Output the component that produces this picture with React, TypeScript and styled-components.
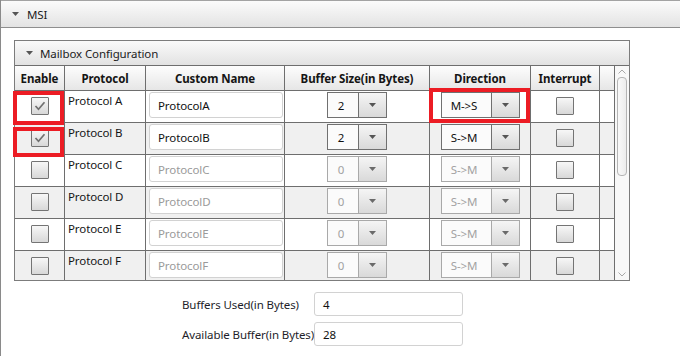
import React from "react";
import styled, { createGlobalStyle } from "styled-components";

const GlobalStyle = createGlobalStyle`
  html, body { margin: 0; padding: 0; background: #fff; }
  body {
    font-family: "Noto Sans", "Open Sans", sans-serif;
    font-size: 11.5px;
    letter-spacing: -0.1px;
    color: #151515;
  }
`;

const LINE = "#6e6e6e";
const COLS = "50px 81px 139px 145px 101px 69px 15px";

type Row = {
  name: string;
  custom: string;
  size: string;
  dir: string;
  checked: boolean;
  active: boolean;
};

const rows: Row[] = [
  { name: "Protocol A", custom: "ProtocolA", size: "2", dir: "M->S", checked: true, active: true },
  { name: "Protocol B", custom: "ProtocolB", size: "2", dir: "S->M", checked: true, active: true },
  { name: "Protocol C", custom: "ProtocolC", size: "0", dir: "S->M", checked: false, active: false },
  { name: "Protocol D", custom: "ProtocolD", size: "0", dir: "S->M", checked: false, active: false },
  { name: "Protocol E", custom: "ProtocolE", size: "0", dir: "S->M", checked: false, active: false },
  { name: "Protocol F", custom: "ProtocolF", size: "0", dir: "S->M", checked: false, active: false },
];

const Page = styled.div`
  position: relative;
  width: 680px;
  height: 356px;
  overflow: hidden;
  background: #fff;
`;

const Section = styled.section`
  height: 100%;
  box-sizing: border-box;
  border-left: 1px solid #8a8a8a;
`;

const SectionHeader = styled.div`
  height: 28px;
  box-sizing: border-box;
  border-top: 1px solid #a3a3a3;
  border-bottom: 1px solid #8e8e8e;
  background: linear-gradient(#fbfbfb, #e3e3e3);
  display: flex;
  align-items: center;
  gap: 8px;
  padding-left: 11px;
`;

const Title = styled.span`
  font-size: 11.5px;
  color: #1c1c1c;
`;

const SectionBody = styled.div`
  padding: 12px 0 0 13px;
`;

const Panel = styled.div`
  width: 616px;
  box-sizing: border-box;
  border: 1px solid #7c7c7c;
`;

const PanelHeader = styled.div`
  height: 25px;
  box-sizing: border-box;
  border-bottom: 1px solid ${LINE};
  background: linear-gradient(#fafafa, #e2e2e2);
  display: flex;
  align-items: center;
  gap: 7px;
  padding-left: 11px;
`;

const TableArea = styled.div`
  display: flex;
  height: 214px;
`;

const Grid = styled.div`
  width: 600px;
  display: grid;
  grid-template-columns: ${COLS};
  grid-template-rows: 25px repeat(6, 32px);
  overflow: hidden;
`;

const HeadCell = styled.div`
  box-sizing: border-box;
  border-right: 1px solid ${LINE};
  border-bottom: 1px solid ${LINE};
  background: linear-gradient(#fdfdfd, #e6e6e6);
  display: flex;
  align-items: center;
  justify-content: center;
  font-weight: 700;
  font-size: 11.5px;
  color: #151515;
  white-space: nowrap;
`;

const Cell = styled.div<{ $alt: boolean; $align?: string; $top?: number }>`
  box-sizing: border-box;
  border-right: 1px solid ${LINE};
  border-bottom: 1px solid ${LINE};
  background: ${(p) => (p.$alt ? "#f0f0f0" : "#ffffff")};
  display: flex;
  align-items: flex-start;
  justify-content: ${(p) => p.$align || "center"};
  padding-top: ${(p) => p.$top ?? 1}px;
  padding-left: ${(p) => (p.$align === "flex-start" ? 3 : 0)}px;
  white-space: nowrap;
`;

const ProtoText = styled.span`
  font-size: 11.5px;
  line-height: 16px;
  color: #151515;
`;

const Box = styled.span`
  width: 18px;
  height: 18px;
  box-sizing: border-box;
  border: 1px solid #747474;
  border-radius: 1px;
  background: linear-gradient(#f7f7f7, #d8d8d8);
  display: inline-flex;
  align-items: center;
  justify-content: center;
`;

const TextBox = styled.div<{ $w: number; $h: number; $dim?: boolean }>`
  width: ${(p) => p.$w}px;
  height: ${(p) => p.$h}px;
  box-sizing: border-box;
  border: 1px solid #d2d2d2;
  border-radius: 3px;
  background: #fff;
  display: flex;
  align-items: center;
  padding-left: 8px;
  font-size: 11.5px;
  color: ${(p) => (p.$dim ? "#9a9a9a" : "#111")};
`;

const Combo = styled.div<{ $w: number; $dim: boolean }>`
  width: ${(p) => p.$w}px;
  height: 26px;
  box-sizing: border-box;
  border: 1px solid ${(p) => (p.$dim ? "#a9a9a9" : "#707070")};
  display: flex;
  background: #fbfbfb;
`;

const ComboText = styled.div<{ $dim: boolean }>`
  flex: 1;
  display: flex;
  align-items: center;
  justify-content: center;
  padding-right: 4px;
  font-size: 11.5px;
  color: ${(p) => (p.$dim ? "#a2a2a2" : "#111")};
`;

const ComboButton = styled.div<{ $dim: boolean }>`
  width: 28px;
  box-sizing: border-box;
  border-left: 1px solid ${(p) => (p.$dim ? "#a9a9a9" : "#707070")};
  background: linear-gradient(#f5f5f5, #d9d9d9);
  display: flex;
  align-items: center;
  justify-content: center;
`;

const Scrollbar = styled.div`
  width: 14px;
  background: #f8f8f8;
  display: flex;
  flex-direction: column;
  align-items: center;
  padding: 3px 0 3px;
  box-sizing: border-box;
`;

const Thumb = styled.div`
  width: 10px;
  height: 99px;
  margin-top: 3px;
  box-sizing: border-box;
  border: 1px solid #b4b4b4;
  border-radius: 4px;
  background: linear-gradient(90deg, #f9f9f9, #ececec);
`;

const Spacer = styled.div`
  flex: 1;
`;

const Form = styled.div`
  margin: 11px 0 0 168px;
  display: grid;
  grid-template-columns: 130px 149px;
  grid-auto-rows: 24px;
  column-gap: 2px;
  row-gap: 6px;
  align-items: center;
`;

const Label = styled.span`
  font-size: 11.5px;
  color: #1e1e2a;
  white-space: nowrap;
`;

const Marker = styled.div<{ $x: number; $y: number; $w: number; $h: number }>`
  position: absolute;
  left: ${(p) => p.$x}px;
  top: ${(p) => p.$y}px;
  width: ${(p) => p.$w}px;
  height: ${(p) => p.$h}px;
  box-sizing: border-box;
  border: 4px solid #ec1c24;
  pointer-events: none;
`;

const Caret = ({ color = "#555" }: { color?: string }) => (
  <svg width="7" height="4" viewBox="0 0 7 4">
    <path d="M0 0h7L3.5 4z" fill={color} />
  </svg>
);

const Check = () => (
  <svg width="12" height="10" viewBox="0 0 12 10">
    <polyline points="1.5,5 4.5,8.3 10.5,1.3" fill="none" stroke="#707070" strokeWidth="1.7" />
  </svg>
);

const Chevron = ({ up }: { up?: boolean }) => (
  <svg width="8" height="5" viewBox="0 0 8 5">
    <polyline
      points={up ? "0.5,4.5 4,1 7.5,4.5" : "0.5,0.5 4,4 7.5,0.5"}
      fill="none"
      stroke="#a8a8a8"
      strokeWidth="1"
    />
  </svg>
);

const DropDown = ({ value, width, dim }: { value: string; width: number; dim: boolean }) => (
  <Combo $w={width} $dim={dim}>
    <ComboText $dim={dim}>{value}</ComboText>
    <ComboButton $dim={dim}>
      <Caret color={dim ? "#6a6a6a" : "#555"} />
    </ComboButton>
  </Combo>
);

export default function App() {
  const heads = ["Enable", "Protocol", "Custom Name", "Buffer Size(in Bytes)", "Direction", "Interrupt", ""];
  return (
    <Page>
      <GlobalStyle />
      <Section>
        <SectionHeader>
          <Caret />
          <Title>MSI</Title>
        </SectionHeader>
        <SectionBody>
          <Panel>
            <PanelHeader>
              <Caret />
              <Title>Mailbox Configuration</Title>
            </PanelHeader>
            <TableArea>
              <Grid>
                {heads.map((h, i) => (
                  <HeadCell key={"h" + i}>{h}</HeadCell>
                ))}
                {rows.map((r, i) => {
                  const alt = i % 2 === 1;
                  const dim = !r.active;
                  return (
                    <React.Fragment key={r.name}>
                      <Cell $alt={alt} $top={6}>
                        <Box>{r.checked && <Check />}</Box>
                      </Cell>
                      <Cell $alt={alt} $align="flex-start" $top={2}>
                        <ProtoText>{r.name}</ProtoText>
                      </Cell>
                      <Cell $alt={alt} $align="flex-start">
                        <TextBox $w={134} $h={26} $dim={dim}>{r.custom}</TextBox>
                      </Cell>
                      <Cell $alt={alt}>
                        <DropDown value={r.size} width={60} dim={dim} />
                      </Cell>
                      <Cell $alt={alt}>
                        <DropDown value={r.dir} width={79} dim={dim} />
                      </Cell>
                      <Cell $alt={alt} $top={6}>
                        <Box />
                      </Cell>
                      <Cell $alt={alt} />
                    </React.Fragment>
                  );
                })}
              </Grid>
              <Scrollbar>
                <Chevron up />
                <Thumb />
                <Spacer />
                <Chevron />
              </Scrollbar>
            </TableArea>
          </Panel>
          <Form>
            <Label>Buffers Used(in Bytes)</Label>
            <TextBox $w={149} $h={24}>4</TextBox>
            <Label>Available Buffer(in Bytes)</Label>
            <TextBox $w={149} $h={24}>28</TextBox>
          </Form>
        </SectionBody>
      </Section>
      <Marker $x={13} $y={91} $w={51} $h={34} />
      <Marker $x={13} $y={127} $w={51} $h={30} />
      <Marker $x={429} $y={88} $w={101} $h={35} />
    </Page>
  );
}
